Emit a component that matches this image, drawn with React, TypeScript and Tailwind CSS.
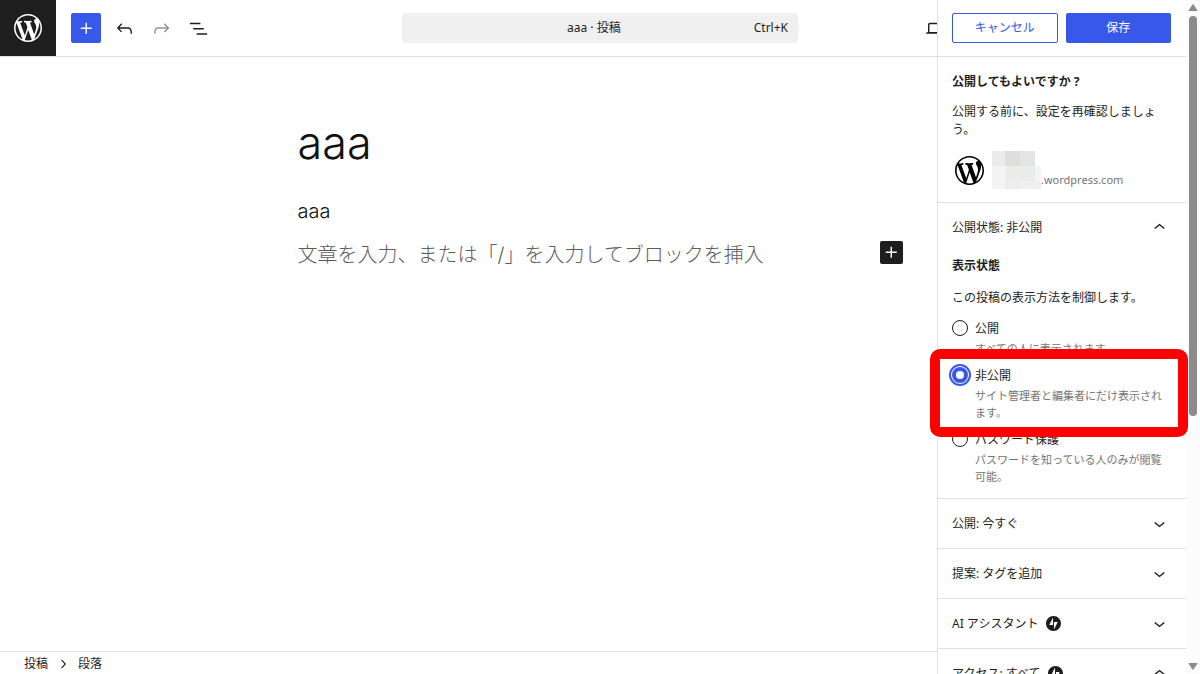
import {useState} from "react";
import type {ReactNode} from "react";

const icons = {
    plus: "M11 12.5V17.5H12.5V12.5H17.5V11H12.5V6H11V11H6V12.5H11Z",
    undo: "M18.3 11.7c-.6-.6-1.4-.9-2.3-.9H6.7l2.9-3.3-1.1-1-4.5 5L8.5 16l1-1-2.7-2.7H16c.5 0 .9.2 1.3.5 1 1 1 3.4 1 4.5v.3h1.5v-.2c0-1.5 0-4.3-1.5-5.7z",
    redo: "M15.6 6.5l-1.1 1 2.9 3.3H8c-.9 0-1.7.3-2.3.9-1.4 1.5-1.4 4.2-1.4 5.6v.2h1.5v-.3c0-1.1 0-3.5 1-4.5.3-.3.7-.5 1.3-.5h9.2L14.5 15l1.1 1.1 4.6-4.6-4.6-5z",
    listView: "M3 6h11v1.5H3V6Zm3.5 5.5h11V13h-11v-1.5ZM21 17H10v1.5h11V17Z",
    desktop:
        "M20.5 16h-.7V8c0-1.1-.9-2-2-2H6.2c-1.1 0-2 .9-2 2v8h-.7c-.8 0-1.5.7-1.5 1.5h20c0-.8-.7-1.5-1.5-1.5zM5.7 8c0-.3.2-.5.5-.5h11.6c.3 0 .5.2.5.5v7.6H5.7V8z",
    chevronDown: "M17.5 11.6L12 16l-5.5-4.4.9-1.2L12 14l4.5-3.6 1 1.2z",
    chevronUp: "M6.5 12.4L12 8l5.5 4.4-.9 1.2L12 10l-4.5 3.6-1-1.2z",
    chevronRight: "M10.6 6L9.4 7l4.6 5-4.6 5 1.2 1 5.4-6z",
};

function Icon({name, className = "size-[23px]"}: {name: keyof typeof icons; className?: string}) {
    return (
        <svg aria-hidden="true" className={className} fill="currentColor" viewBox="0 0 24 24">
            <path d={icons[name]} />
        </svg>
    );
}

function WordPressLogo({className}: {className: string}) {
    return (
        <svg aria-hidden="true" className={className} fill="currentColor" viewBox="0 0 20 20">
            <path d="M20 10c0-5.51-4.49-10-10-10C4.48 0 0 4.49 0 10c0 5.52 4.48 10 10 10 5.51 0 10-4.48 10-10zM7.78 15.37L4.37 6.22c.55-.02 1.17-.08 1.17-.08.5-.06.44-1.13-.06-1.11 0 0-1.45.11-2.37.11-.18 0-.37 0-.58-.01C4.12 2.69 6.87 1.11 10 1.11c2.33 0 4.45.87 6.05 2.34-.68-.11-1.65.39-1.65 1.58 0 .74.45 1.36.9 2.1.35.61.55 1.36.55 2.46 0 1.49-1.4 5-1.4 5l-3.03-8.37c.54-.02.82-.17.82-.17.5-.05.44-1.25-.06-1.22 0 0-1.44.12-2.38.12-.87 0-2.33-.12-2.33-.12-.5-.03-.56 1.2-.06 1.22l.92.08 1.26 3.41zM17.41 10c.24-.64.74-1.87.43-4.25.7 1.29 1.05 2.71 1.05 4.25 0 3.29-1.73 6.24-4.4 7.78.97-2.59 1.94-5.2 2.92-7.78zM6.1 18.09C3.12 16.65 1.11 13.53 1.11 10c0-1.3.23-2.48.72-3.59C3.25 10.3 4.67 14.2 6.1 18.09zm4.03-6.63l2.58 6.98c-.86.29-1.76.45-2.71.45-.79 0-1.57-.11-2.29-.33.81-2.38 1.62-4.74 2.42-7.1z" />
        </svg>
    );
}

function JetpackLogo() {
    return (
        <svg aria-hidden="true" className="size-[15px]" viewBox="0 0 32 32">
            <path
                d="M16,0C7.2,0,0,7.2,0,16s7.2,16,16,16s16-7.2,16-16S24.8,0,16,0z M15,19H7l8-16V19z M17,29V13h8L17,29z"
                fill="#1e1e1e"
                fillRule="evenodd"
            />
        </svg>
    );
}

const visibilityOptions = [
    {value: "public", label: "公開", description: "すべての人に表示されます。"},
    {value: "private", label: "非公開", description: "サイト管理者と編集者にだけ表示されます。"},
    {value: "password", label: "パスワード保護", description: "パスワードを知っている人のみが閲覧可能。"},
];

function Panel({
    title,
    jetpack = false,
    defaultOpen = false,
    children,
}: {
    title: string;
    jetpack?: boolean;
    defaultOpen?: boolean;
    children?: ReactNode;
}) {
    const [open, setOpen] = useState(defaultOpen);

    return (
        <section className="border-b border-[#e0e0e0]">
            <h2>
                <button
                    aria-expanded={open}
                    className="flex h-[49px] w-full items-center justify-between pr-[15px] pl-3.5 text-left"
                    type="button"
                    onClick={() => setOpen(!open)}
                >
                    <span className="flex items-center gap-2">
                        {title}
                        {jetpack && <JetpackLogo />}
                    </span>
                    <Icon name={open ? "chevronUp" : "chevronDown"} />
                </button>
            </h2>
            {open && children}
        </section>
    );
}

function VisibilityField() {
    const [visibility, setVisibility] = useState("private");

    return (
        <div className="px-3.5 pt-[5px] pb-[13px]">
            <fieldset>
                <legend className="mb-3.5 font-bold">表示状態</legend>
                <p className="mb-[13px]">この投稿の表示方法を制御します。</p>
                <div className="flex flex-col gap-2.5">
                    {visibilityOptions.map(({value, label, description}) => (
                        <div key={value} className="flex items-start gap-[7px]">
                            <input
                                aria-describedby={`${value}-description`}
                                checked={visibility === value}
                                className="size-4 shrink-0 appearance-none rounded-full border border-[#1e1e1e] bg-white checked:border-4 checked:border-[#3858e9] checked:outline-2 checked:outline-offset-1 checked:outline-[#3858e9]"
                                id={value}
                                name="visibility"
                                type="radio"
                                value={value}
                                onChange={() => setVisibility(value)}
                            />
                            <div className="flex flex-col gap-0.5">
                                <label htmlFor={value}>{label}</label>
                                <p className="text-[11px] leading-[17px] text-[#757575]" id={`${value}-description`}>
                                    {description}
                                </p>
                            </div>
                        </div>
                    ))}
                </div>
            </fieldset>
        </div>
    );
}

function SiteCard() {
    return (
        <div className="flex h-[38px] items-center gap-2 pl-[3px] text-black">
            <WordPressLogo className="size-[29px] shrink-0" />
            <div className="flex items-end">
                <div aria-hidden="true" className="w-[49px]">
                    <div className="flex h-[15px]">
                        <span className="w-[13px] bg-[#ebebeb]" />
                        <span className="w-[15px] bg-[#dededd]" />
                        <span className="w-[15px] bg-[#e3e4e4]" />
                    </div>
                    <div className="flex h-[15px]">
                        <span className="w-[13px] bg-[#f4f4f4]" />
                        <span className="w-[15px] bg-[#ececeb]" />
                        <span className="w-[15px] bg-[#e9eceb]" />
                        <span className="w-1.5 bg-[#f4f4f4]" />
                    </div>
                    <div className="flex h-2">
                        <span className="w-[13px] bg-[#f4f4f4]" />
                        <span className="w-[15px] bg-[#ededec]" />
                        <span className="w-[15px] bg-[#eef0f3]" />
                        <span className="w-1.5 bg-[#f0eeec]" />
                    </div>
                </div>
                <span className="text-[11px] text-[#757575]">.wordpress.com</span>
            </div>
        </div>
    );
}

function ScrollTrack() {
    return (
        <div aria-hidden="true" className="flex w-3.5 shrink-0 flex-col items-center bg-[#fcfcfc] py-1">
            <svg className="h-[7px] w-2.5" viewBox="0 0 10 7">
                <path d="M5 0.5 9 6.5H1Z" fill="#8b8b8b" stroke="#8b8b8b" strokeLinejoin="round" />
            </svg>
            <div className="mt-[5px] h-[60%] w-2 rounded-full bg-[#8b8b8b]" />
            <svg className="mt-auto h-[7px] w-2.5" viewBox="0 0 10 7">
                <path d="M5 6.5 9 0.5H1Z" fill="#8b8b8b" stroke="#8b8b8b" strokeLinejoin="round" />
            </svg>
        </div>
    );
}

function PublishSidebar() {
    return (
        <aside className="absolute inset-y-0 right-0 flex overflow-hidden bg-white text-xs leading-[18px]">
            <div className="w-[249px] border-l border-[#e0e0e0]">
                <div className="grid h-[57px] grid-cols-2 items-center gap-2 border-b border-[#e0e0e0] pr-[15px] pl-3.5">
                    <button className="h-[30px] rounded-xs border border-[#3858e9] text-[#3858e9]" type="button">
                        キャンセル
                    </button>
                    <button className="h-[30px] rounded-xs bg-[#3858e9] text-white" type="button">
                        保存
                    </button>
                </div>
                <div className="flex flex-col gap-3 border-b border-[#e0e0e0] px-3.5 pt-4 pb-[13px]">
                    <strong className="font-bold">公開してもよいですか ?</strong>
                    <p>公開する前に、設定を再確認しましょう。</p>
                    <SiteCard />
                </div>
                <Panel defaultOpen title="公開状態: 非公開">
                    <VisibilityField />
                </Panel>
                <Panel title="公開: 今すぐ" />
                <Panel title="提案: タグを追加" />
                <Panel jetpack title="AI アシスタント" />
                <Panel defaultOpen jetpack title="アクセス: すべて" />
            </div>
            <ScrollTrack />
        </aside>
    );
}

function EditorHeader() {
    return (
        <header className="grid h-[57px] grid-cols-3 items-center border-b border-[#e0e0e0]">
            <div className="flex items-center">
                <a
                    aria-label="投稿一覧を表示"
                    className="flex size-14 items-center justify-center bg-[#1e1e1e] text-white"
                    href="#"
                >
                    <WordPressLogo className="size-7" />
                </a>
                <button
                    aria-label="ブロック挿入ツールを切り替え"
                    className="ml-[15px] flex size-[30px] items-center justify-center rounded-xs bg-[#3858e9] text-white"
                    type="button"
                >
                    <Icon name="plus" />
                </button>
                <div className="ml-3 flex gap-3.5">
                    <button aria-label="元に戻す" type="button">
                        <Icon name="undo" />
                    </button>
                    <button disabled aria-label="やり直す" className="text-[#949494]" type="button">
                        <Icon name="redo" />
                    </button>
                    <button aria-label="ドキュメント概観" type="button">
                        <Icon name="listView" />
                    </button>
                </div>
            </div>
            <button
                className="flex h-[30px] w-full max-w-[396px] items-center justify-self-center rounded-sm bg-[#f0f0f0] pr-2.5 pl-8 text-xs"
                type="button"
            >
                <span className="flex-1 text-center">aaa · 投稿</span>
                <span>Ctrl+K</span>
            </button>
            <button aria-label="表示" className="ml-[124px] justify-self-start" type="button">
                <Icon name="desktop" />
            </button>
        </header>
    );
}

export default function App() {
    return (
        <div className="relative flex h-screen flex-col overflow-hidden bg-white font-['Noto_Sans','Noto_Sans_CJK_JP',sans-serif] text-[#1e1e1e]">
            <EditorHeader />
            <main className="flex-1 font-['Inter','Noto_Sans_CJK_JP',sans-serif] font-light text-[#111]">
                <div className="mx-auto max-w-[605px] pt-[60px]">
                    <h1 className="text-[45px] leading-[52px]">aaa</h1>
                    <p className="mt-[26px] text-xl leading-8">aaa</p>
                    <div className="mt-3 flex items-start justify-between text-xl leading-8">
                        <p className="text-[#5c5c5c]">文章を入力、または「/」を入力してブロックを挿入</p>
                        <button
                            aria-label="ブロックを追加"
                            className="mt-0.5 flex size-[23px] items-center justify-center rounded-xs bg-[#1e1e1e] text-white"
                            type="button"
                        >
                            <Icon name="plus" />
                        </button>
                    </div>
                </div>
            </main>
            <footer className="flex h-[23px] items-center gap-1.5 border-t border-[#e0e0e0] px-6 pt-px text-xs">
                <span>投稿</span>
                <Icon className="size-[18px]" name="chevronRight" />
                <span>段落</span>
            </footer>
            <PublishSidebar />
            {/* callout around the selected visibility option */}
            <div className="pointer-events-none absolute top-[349px] right-3 h-[88px] w-[258px] rounded-[10px] border-[10px] border-[#fe0000]" />
        </div>
    );
}
